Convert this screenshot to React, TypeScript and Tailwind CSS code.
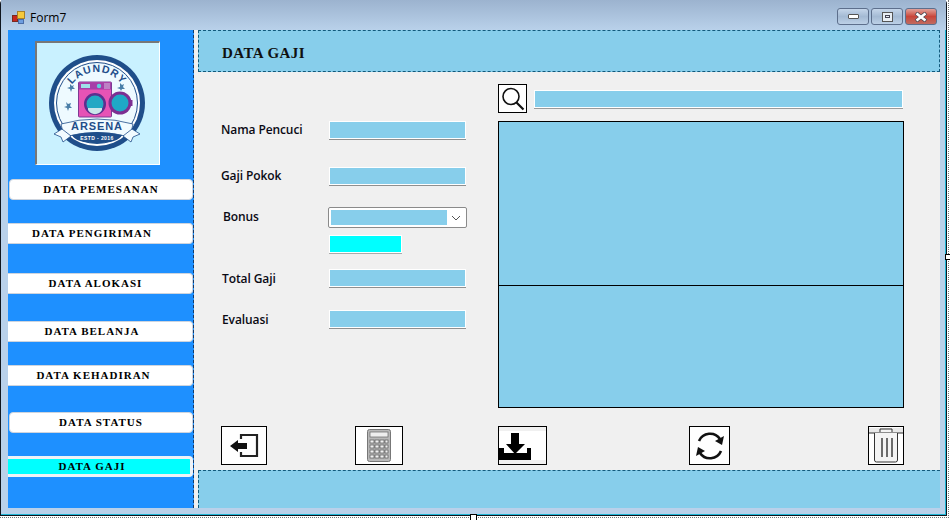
const serif = "font-['Liberation_Serif',serif]";

function Logo() {
  return (
    <svg width="122" height="121" viewBox="37 43 122 121" className="block">
      <rect x="35" y="41" width="126" height="125" fill="#c9f1ff" />
      <circle cx="97" cy="103" r="48" fill="#1f4e8a" />
      <circle cx="97" cy="103" r="43" fill="#ffffff" />
      <circle cx="97" cy="103" r="40.5" fill="#eefaff" stroke="#1f4e8a" strokeWidth="1" />
      <defs>
        <path id="arc" d="M 66 103 A 31 31 0 0 1 128 103" />
      </defs>
      <text fontFamily="'Liberation Sans',sans-serif" fontWeight="700" fontSize="10.5" letterSpacing="1" fill="#1f4e8a">
        <textPath href="#arc" startOffset="50%" textAnchor="middle">LAUNDRY</textPath>
      </text>
      <g fill="#4a7fa8">
        <path d="M70 84l2 2 2-1-1 2 2 2-3 0-1 3-1-3-3-1 3-1z" />
        <path d="M120 83l2 2 2-1-1 3 2 2-3 0-1 2-1-2-3-1 3-1z" />
        <path d="M66 102l2 2 3-1-1 3 2 2-3 0-1 3-1-3-3-1 3-1z" />
      </g>
      <rect x="78.5" y="82" width="33" height="35" rx="1" fill="#e653b5" stroke="#7d3a94" strokeWidth="1" />
      <rect x="79" y="82.5" width="32" height="7" fill="#a63fa8" />
      <rect x="81" y="84" width="9" height="4" fill="#9fe0ea" />
      <circle cx="99" cy="86" r="2.2" fill="#5fd0dd" />
      <path d="M104 84h6M104 86h6M104 88h6" stroke="#e0e6f0" strokeWidth="0.8" />
      <circle cx="95" cy="104" r="11" fill="#5b2f8f" />
      <circle cx="95" cy="104" r="8.5" fill="#22a8c4" />
      <path d="M88 108h14v2a8 8 0 0 1-14 0z" fill="#c9e6ea" />
      <circle cx="120" cy="103" r="11.5" fill="#7d2f92" />
      <circle cx="120" cy="103" r="8.5" fill="#1fa9c6" />
      <rect x="130" y="100" width="2.5" height="6" fill="#7d2f92" />
      <path d="M61 124q36-10 72 0l-3 13q-33-9-66 0z" fill="#f2fbff" stroke="#1f4e8a" strokeWidth="0.8" />
      <path d="M62 129l-8 5 7 3 2 5 8-6zM132 129l8 5-7 3-2 5-8-6z" fill="#f2fbff" stroke="#1f4e8a" strokeWidth="0.8" />
      <path d="M72 135q25-6 50 0q-4 8-25 8t-25-8z" fill="#1f4e8a" />
      <text x="97" y="129.5" textAnchor="middle" fontFamily="'Liberation Sans',sans-serif" fontWeight="700" fontSize="11" letterSpacing="0.9" fill="#1f4e8a">ARSENA</text>
      <text x="97" y="140" textAnchor="middle" fontFamily="'Liberation Sans',sans-serif" fontWeight="700" fontSize="5" letterSpacing="0.4" fill="#ffffff">ESTD - 2016</text>
    </svg>
  );
}

function NavBtn({ label, className, active }: { label: string; className: string; active?: boolean }) {
  return (
    <div className={`flex items-center justify-center rounded-r-[4px] text-[11px] font-bold tracking-[1px] text-black ${serif} ${active ? "border-y-[3px] border-r-[3px] border-[#eef2f7] bg-[#00ffff]" : "border-y border-r border-[#cdd4de] bg-white"} ${className}`}>
      {label}
    </div>
  );
}

function Field({ className }: { className?: string }) {
  return <div className={`h-[18px] w-[137px] self-start border border-white bg-[#87ceeb] shadow-[0_1px_0_#8f8f8f] ${className ?? ""}`} />;
}

function Label({ children, className }: { children: string; className?: string }) {
  return <div className={`text-[12px] font-semibold tracking-[-0.1px] text-[#0a0a14] font-['Open_Sans',sans-serif] ${className ?? ""}`}>{children}</div>;
}

function IconBox({ className, children }: { className: string; children: React.ReactNode }) {
  return <div className={`flex h-[39px] items-center justify-center border border-black bg-white ${className}`}>{children}</div>;
}

function WinBtn({ className, children }: { className: string; children: React.ReactNode }) {
  return <div className={`flex h-[17px] w-[32px] items-center justify-center rounded-[3px] border border-[#5d6f8c] ${className}`}>{children}</div>;
}

export default function App() {
  return (
    <div className="relative h-[520px] w-[950px] overflow-hidden bg-white font-['Liberation_Sans',sans-serif]">
      <div className="h-[518px] w-[949px] border-r border-b border-dotted border-[#777]">
        <div className="flex h-[516px] w-[947px] flex-col rounded-t-[4px] border border-t-0 border-[#10161e] bg-[#b9d1ea] shadow-[inset_-1px_-1px_0_#1fb6d6]">
          {/* title bar */}
          <div className="flex h-[30px] shrink-0 items-center bg-gradient-to-b from-[#9cb3cf] to-[#b9d1ea] pt-[6px] pr-[9px] pl-[11px]">
            <svg width="14" height="14" viewBox="0 0 14 14" className="mr-[4px] block">
              <rect x="0.5" y="4.5" width="5" height="6" fill="#c8281e" stroke="#7a2a20" />
              <rect x="5.5" y="0.5" width="7" height="7" fill="#f6c93c" stroke="#a8802a" />
              <rect x="6.5" y="8.5" width="5" height="4" fill="#6e9ee0" stroke="#4a6ea8" />
            </svg>
            <span className="text-[12px] text-black font-['Open_Sans',sans-serif]">Form7</span>
            <div className="ml-auto flex gap-[2px] pb-[3px]">
              <WinBtn className="bg-gradient-to-b from-[#c5d6ea] via-[#a4bad4] to-[#bcd0e6]">
                <div className="h-[5px] w-[11px] rounded-[1px] border border-[#555] bg-white" />
              </WinBtn>
              <WinBtn className="bg-gradient-to-b from-[#c5d6ea] via-[#a4bad4] to-[#bcd0e6]">
                <div className="flex h-[10px] w-[11px] items-center justify-center border border-[#555] bg-[#e8eef4]">
                  <div className="h-[3px] w-[5px] border border-[#445]" />
                </div>
              </WinBtn>
              <WinBtn className="border-[#5c2a30] bg-gradient-to-b from-[#e0a09a] via-[#c8453a] to-[#c06a60]">
                <svg width="14" height="10" viewBox="0 0 14 10">
                  <path d="M2 1l10 8M12 1L2 9" stroke="#4a4a55" strokeWidth="4" />
                  <path d="M2.5 1.5l9 7M11.5 1.5l-9 7" stroke="#fff" strokeWidth="2.6" />
                </svg>
              </WinBtn>
            </div>
          </div>

          {/* client */}
          <div className="ml-[7px] flex h-[478px] w-[932px] bg-[#f0f0f0]">
            <aside className="flex h-full w-[186px] shrink-0 flex-col overflow-hidden border-r border-dashed border-r-[#123a6a] bg-[#1e90ff]">
              <div className="mt-[11px] ml-[27px] w-[125px] border border-t-2 border-l-2 border-t-[#777] border-r-white border-b-white border-l-[#777]">
                <Logo />
              </div>
              <div className="mt-[14px] flex flex-col">
                <NavBtn label="DATA PEMESANAN" className="ml-px h-[21px] rounded-l-[4px] border-l" />
                <NavBtn label="DATA PENGIRIMAN" className="mt-[23px] h-[21px] pr-[16px]" />
                <NavBtn label="DATA ALOKASI" className="mt-[29px] h-[21px] pr-[9px]" />
                <NavBtn label="DATA BELANJA" className="mt-[27px] h-[21px] pr-[16px]" />
                <NavBtn label="DATA KEHADIRAN" className="mt-[23px] h-[21px] pr-[13px]" />
                <NavBtn label="DATA STATUS" className="mt-[26px] ml-px h-[21px] rounded-l-[4px] border-l" />
                <NavBtn label="DATA GAJI" active className="mt-[23px] h-[21px] pr-[14px]" />
              </div>
            </aside>

            <main className="ml-[4px] flex min-w-0 flex-1 flex-col">
              <div className="flex h-[42px] shrink-0 items-center border border-dashed border-[#125a7c] bg-[#87ceeb] pt-[4px] pl-[23px]">
                <span className={`text-[15px] font-bold tracking-[0.45px] text-[#101010] ${serif}`}>DATA GAJI</span>
              </div>

              <div className="flex flex-1 flex-col">
                <div className="flex">
                  {/* form */}
                  <div className="w-[300px] shrink-0 pt-[49px] pl-[23px]">
                    <div className="flex h-[19px] items-center">
                      <Label className="w-[108px] -translate-y-px">Nama Pencuci</Label>
                      <Field />
                    </div>
                    <div className="mt-[27px] flex h-[19px] items-center">
                      <Label className="w-[108px] -translate-y-px">Gaji Pokok</Label>
                      <Field />
                    </div>
                    <div className="mt-[21px] flex h-[21px] items-center">
                      <Label className="w-[107px] -translate-y-px pl-[2px]">Bonus</Label>
                      <div className="flex h-[21px] w-[139px] items-center rounded-[2px] border border-[#8a8a8a] bg-white p-[2px]">
                        <div className="h-full w-[116px] bg-[#87ceeb]" />
                        <svg width="10" height="6" viewBox="0 0 10 6" className="ml-[4px]">
                          <path d="M1 1l4 4 4-4" fill="none" stroke="#555" strokeWidth="1" />
                        </svg>
                      </div>
                    </div>
                    <div className="mt-[7px] ml-[108px] h-[18px] w-[73px] border border-white bg-[#00ffff] shadow-[0_1px_0_#aaa]" />
                    <div className="mt-[16px] flex h-[19px] items-center">
                      <Label className="w-[108px] pl-px">Total Gaji</Label>
                      <Field />
                    </div>
                    <div className="mt-[22px] flex h-[19px] items-center">
                      <Label className="w-[108px] pl-px">Evaluasi</Label>
                      <Field />
                    </div>
                  </div>

                  {/* right column */}
                  <div className="w-[406px] shrink-0 pt-[12px]">
                    <div className="flex items-center gap-[7px]">
                      <div className="flex h-[29px] w-[29px] items-center justify-center border border-black bg-white">
                        <svg width="25" height="25" viewBox="0 0 25 25">
                          <circle cx="11" cy="10.5" r="8" fill="none" stroke="#111" strokeWidth="1.6" />
                          <path d="M16.5 16.5l7 7" stroke="#111" strokeWidth="2.2" />
                        </svg>
                      </div>
                      <div className="h-[18px] w-[369px] border border-white bg-[#87ceeb] shadow-[0_1px_0_#9a9a9a]" />
                    </div>
                    <div className="mt-[8px] flex h-[287px] flex-col border border-black bg-[#87ceeb]">
                      <div className="h-[164px] border-b border-black" />
                    </div>
                  </div>
                </div>

                {/* actions */}
                <div className="mt-[18px] flex items-center pl-[23px]">
                  <IconBox className="w-[46px] bg-[#f7f7f7]">
                    <svg width="30" height="26" viewBox="0 0 30 26">
                      <path d="M12 6V2h16v21H12v-4" fill="none" stroke="#222" strokeWidth="2.2" />
                      <path d="M1 13l8-6v3h9v6H9v3z" fill="#111" />
                    </svg>
                  </IconBox>
                  <IconBox className="ml-[88px] w-[48px] bg-[#f8f8f8]">
                    <svg width="24" height="33" viewBox="0 0 24 33">
                      <rect x="0.5" y="0.5" width="23" height="32" rx="2" fill="#b8b8b8" stroke="#777" />
                      <rect x="3" y="3" width="18" height="5" fill="#eee" stroke="#666" strokeWidth="0.7" />
                      <g fill="#f0f0f0" stroke="#555" strokeWidth="0.7">
                        <rect x="3" y="11" width="4" height="3" /><rect x="8" y="11" width="4" height="3" /><rect x="13" y="11" width="4" height="3" /><rect x="18" y="11" width="3" height="3" />
                        <rect x="3" y="16" width="4" height="3" /><rect x="8" y="16" width="4" height="3" /><rect x="13" y="16" width="4" height="3" /><rect x="18" y="16" width="3" height="3" />
                        <rect x="3" y="21" width="4" height="3" /><rect x="8" y="21" width="4" height="3" /><rect x="13" y="21" width="4" height="3" /><rect x="18" y="21" width="3" height="3" />
                        <rect x="3" y="26" width="4" height="3" /><rect x="8" y="26" width="4" height="3" /><rect x="13" y="26" width="4" height="3" /><rect x="18" y="26" width="3" height="3" />
                      </g>
                    </svg>
                  </IconBox>
                  <div className="ml-[95px] h-[39px] w-[49px] border border-black bg-[#f0f0f0]">
                    <svg width="47" height="37" viewBox="499 427 47 37" className="block">
                      <rect x="499" y="431" width="47" height="29" fill="#ffffff" />
                      <path d="M499 448h5v5h23v-5h4v12h-32z" fill="#000" />
                      <path d="M511 433h8v11h6l-10 10-9-10h5z" fill="#000" />
                    </svg>
                  </div>
                  <IconBox className="ml-[142px] w-[41px]">
                    <svg width="32" height="30" viewBox="0 0 32 30">
                      <path d="M5 10a12 12 0 0 1 21-2" fill="none" stroke="#111" strokeWidth="2.6" />
                      <path d="M27 20a12 12 0 0 1-21 2" fill="none" stroke="#111" strokeWidth="2.6" />
                      <path d="M30 5l-2 9-7-4z" fill="#111" />
                      <path d="M2 25l2-9 7 4z" fill="#111" />
                    </svg>
                  </IconBox>
                  <div className="ml-[138px] h-[39px] w-[36px] border border-black bg-white">
                    <svg width="34" height="37" viewBox="0 0 34 37" className="block">
                      <rect x="0" y="1" width="34" height="5" fill="#e8e8e8" />
                      <path d="M0 6h34" stroke="#333" strokeWidth="1" />
                      <path d="M11 5V2h12v3" fill="#f4f4f4" stroke="#333" strokeWidth="1" />
                      <path d="M5.5 6v27a2 2 0 0 0 2 2h19a2 2 0 0 0 2-2V6" fill="#f4f4f4" stroke="#333" strokeWidth="1" />
                      <path d="M13 11v19M18 11v19M23 11v19" stroke="#333" strokeWidth="1.4" />
                    </svg>
                  </div>
                </div>
              </div>

              <div className="h-[38px] shrink-0 border-t border-l border-dashed border-[#125a7c] bg-[#87ceeb]" />
            </main>
          </div>
        </div>
      </div>
      {/* resize notches lying over the window edge */}
      <div className="absolute top-[514px] left-[470px] h-[6px] w-[7px] border-x border-t border-black bg-white" />
      <div className="absolute top-[254px] left-[945px] h-[6px] w-[5px] border-y border-l border-black bg-white" />
    </div>
  );
}
